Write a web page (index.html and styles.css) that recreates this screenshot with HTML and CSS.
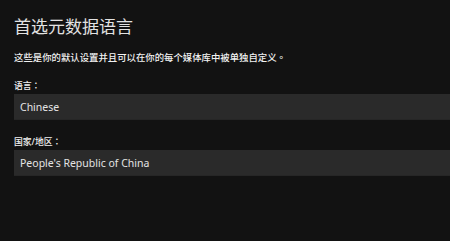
FILE: index.html
```html
<!DOCTYPE html>
<html lang="zh-CN">
<head>
<meta charset="utf-8">
<link rel="stylesheet" href="styles.css">
</head>
<body>
<div class="page">
  <h1 class="title">首选元数据语言</h1>
  <p class="desc">这些是你的默认设置并且可以在你的每个媒体库中被单独自定义<span class="punct" lang="zh-TW">。</span></p>
  <div class="field">
    <label class="label">语言<span class="punct" lang="zh-TW">：</span></label>
    <div class="select" lang="en">Chinese</div>
  </div>
  <div class="field">
    <label class="label">国家/地区<span class="punct" lang="zh-TW">：</span></label>
    <div class="select" lang="en">People's Republic of China</div>
  </div>
</div>
</body>
</html>
```

FILE: styles.css
```css
html, body {
  margin: 0;
  padding: 0;
  background: #121212;
  overflow: hidden;
}
body {
  width: 450px;
  height: 241px;
  font-family: "Noto Sans", "Noto Sans CJK SC", sans-serif;
  color: #e6e6e6;
}
.page {
  padding: 16px 0 0 14px;
  display: flex;
  flex-direction: column;
}
.title {
  margin: 0;
  font-size: 17px;
  line-height: 22px;
  font-weight: 400;
  color: #e2e2e2;
}
.desc {
  margin: 12px 0 0 0;
  font-size: 9.4px;
  line-height: 14px;
  font-weight: 500;
  color: #f2f2f2;
}
.punct {
  font-family: "Noto Sans CJK TC", sans-serif;
}
.field {
  display: flex;
  flex-direction: column;
  margin-top: 16px;
}
.field:first-of-type {
  margin-top: 15px;
}
.label {
  font-size: 8.8px;
  line-height: 12px;
  font-weight: 500;
  color: #f0f0f0;
  margin-bottom: 2px;
}
.select {
  height: 26px;
  line-height: 26px;
  background: #2a2a2a;
  border-bottom: 1px solid #262626;
  box-sizing: border-box;
  padding-left: 6px;
  font-size: 10.5px;
  color: #e4e4e4;
}
```
